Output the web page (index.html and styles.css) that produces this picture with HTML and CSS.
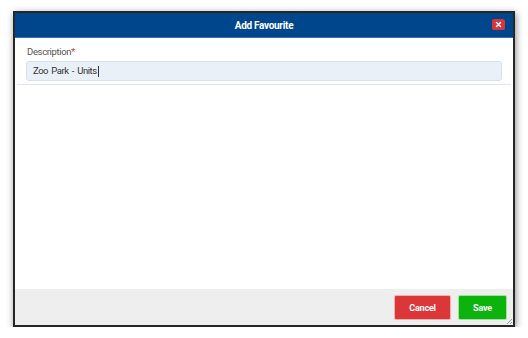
FILE: index.html
```html
<!DOCTYPE html>
<html>
<head>
<meta charset="utf-8">
<link rel="stylesheet" href="styles.css">
</head>
<body>
<div class="stage">
  <div class="dialog">
    <div class="header">
      <span class="title">Add Favourite</span>
      <span class="close">
        <svg width="7" height="7" viewBox="0 0 7 7"><path d="M1.5 1.5L5.5 5.5M5.5 1.5L1.5 5.5" stroke="#fff" stroke-width="1.5" stroke-linecap="round"/></svg>
      </span>
    </div>
    <div class="content">
      <div class="field">
        <label class="label">Description<span class="req">*</span></label>
        <div class="input">Zoo Park - Units<span class="caret"></span></div>
      </div>
    </div>
    <div class="footer">
      <button class="btn cancel">Cancel</button>
      <button class="btn save">Save</button>
      <svg class="grip" width="8" height="8" viewBox="0 0 8 8"><path d="M7 2L2 7M7 5L5 7" stroke="#999" stroke-width="1"/></svg>
    </div>
  </div>
</div>
</body>
</html>
```
FILE: styles.css
```css
html, body {
  margin: 0;
  padding: 0;
  background: #ffffff;
  font-family: Roboto, "Liberation Sans", sans-serif;
}
.stage {
  padding: 11px 0 0 13px;
}
.dialog {
  width: 498px;
  height: 312px;
  border: 2px solid #262626;
  box-shadow: 1px 2px 7px rgba(0, 0, 0, 0.45);
  display: flex;
  flex-direction: column;
  background: #fff;
}
.header {
  height: 24px;
  background: #00468c;
  border-bottom: 1px solid #3c6ea6;
  display: flex;
  align-items: center;
  justify-content: center;
  position: relative;
}
.title {
  color: #fff;
  font-weight: bold;
  font-size: 10px;
  letter-spacing: -0.3px;
}
.close {
  position: absolute;
  right: 8px;
  top: 6px;
  width: 13px;
  height: 11px;
  background: #d7353c;
  border-radius: 2px;
  display: flex;
  align-items: center;
  justify-content: center;
}
.content {
  flex: 1;
  padding: 0 2px;
}
.field {
  padding: 8px 9px 3px 9px;
  border-bottom: 1px solid #e2e6ea;
}
.label {
  display: block;
  font-size: 9.5px;
  letter-spacing: -0.35px;
  line-height: 12px;
  color: #555;
  padding-left: 1px;
  margin-bottom: 3px;
}
.req {
  color: #e0333a;
}
.input {
  height: 18px;
  background: #e9f0f8;
  border: 1px solid #d3e2f1;
  border-radius: 3px;
  font-size: 9.5px;
  letter-spacing: -0.45px;
  word-spacing: 1.3px;
  line-height: 18px;
  color: #333;
  padding-left: 6px;
  display: flex;
  align-items: center;
  white-space: pre;
}
.caret {
  display: inline-block;
  width: 1px;
  height: 11px;
  background: #333;
  margin-left: 1px;
}
.footer {
  height: 36px;
  background: #eeeeee;
  display: flex;
  justify-content: flex-end;
  align-items: flex-start;
  gap: 7px;
  padding: 6px 6px 0 0;
  box-sizing: border-box;
  position: relative;
}
.btn {
  height: 25px;
  border: 1px solid rgba(255,255,255,0.6);
  border-radius: 2px;
  color: #fff;
  font-family: Roboto, "Liberation Sans", sans-serif;
  font-size: 9px;
  letter-spacing: -0.2px;
  font-weight: bold;
  padding: 0;
}
.cancel {
  width: 57px;
  background: #db3638;
}
.save {
  width: 49px;
  background: #0db30d;
}
.grip {
  position: absolute;
  right: 0;
  bottom: 0;
}
```
